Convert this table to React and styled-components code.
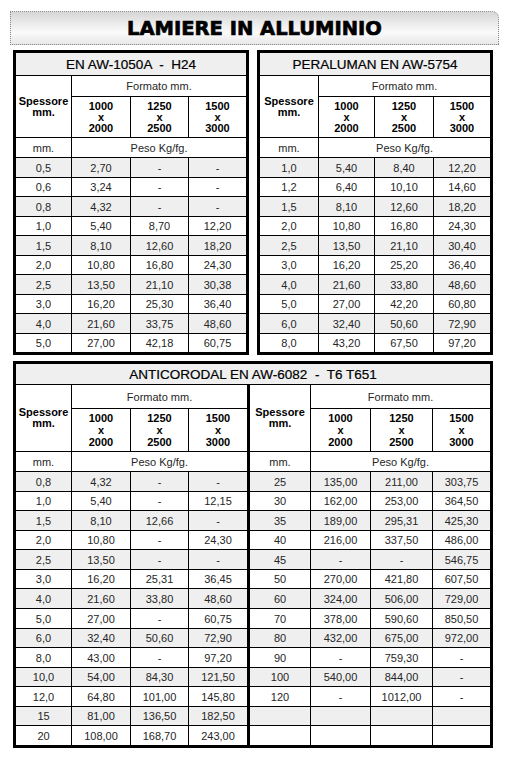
import React from "react";
import styled, { createGlobalStyle } from "styled-components";

const GlobalStyle = createGlobalStyle`
  body {
    margin: 0;
    background: #fff;
    font-family: "Liberation Sans", Arial, sans-serif;
  }
`;

const Page = styled.div`
  width: 506px;
  padding-top: 11px;
`;

const Banner = styled.div`
  height: 32px;
  margin: 0 7px 0 10px;
  border: 1px dotted #8a8a8a;
  border-top-right-radius: 7px;
  background: linear-gradient(180deg, #d6d6d6 0%, #ebebeb 35%, #fafafa 65%, #e8e8e8 100%);
  display: flex;
  align-items: center;
  justify-content: center;
`;

const BannerText = styled.h1`
  margin: 0;
  font-family: "DejaVu Sans", "Liberation Sans", sans-serif;
  font-size: 19.5px;
  font-weight: 700;
  color: #000;
  -webkit-text-stroke: 0.7px #000;
`;

const TopRow = styled.div`
  display: flex;
  gap: 8px;
  margin: 5px 13px 0;
`;

const Panel = styled.section`
  box-sizing: border-box;
  width: ${({ $width }) => $width}px;
  margin-top: ${({ $top }) => $top || 0}px;
  margin-left: ${({ $left }) => $left || 0}px;
  border: 3px solid #000;
`;

const PanelTitle = styled.h2`
  margin: 0;
  height: ${({ $h }) => $h}px;
  background: #efefef;
  border-bottom: 1px solid #000;
  display: flex;
  align-items: center;
  justify-content: center;
  font-size: 13.5px;
  font-weight: 400;
  color: #000;
  -webkit-text-stroke: 0.2px #000;
  white-space: pre;
`;

const Split = styled.div`
  display: flex;
`;

const Half = styled.div`
  border-right: ${({ $divider }) => ($divider ? "3px solid #000" : "none")};
`;

const Grid = styled.div`
  display: grid;
  gap: 1px;
  background: #000;
  grid-template-columns: ${({ $cols }) => $cols.map((c) => `${c}px`).join(" ")};
  grid-template-rows: ${({ $rows }) => $rows.map((r) => `${r}px`).join(" ")};
`;

const Cell = styled.div`
  display: flex;
  align-items: center;
  justify-content: center;
  text-align: center;
  background: ${({ $shade }) => ($shade ? "#efefef" : "#fff")};
  grid-column: ${({ $span }) => ($span ? `span ${$span}` : "auto")};
  font-size: 11px;
  color: #262626;
`;

const HeadCell = styled(Cell)`
  font-weight: 700;
  color: #000;
  line-height: ${({ $lh }) => $lh || 11}px;
`;

const SideHead = styled(HeadCell)`
  grid-row: span 2;
`;

const spread = (total, n) =>
  Array.from({ length: n }, (_, i) => Math.round(((i + 1) * total) / n) - Math.round((i * total) / n));

const SIZES = [
  ["1000", "2000"],
  ["1250", "2500"],
  ["1500", "3000"],
];

const Sheet = ({ cols, heads, dataHeight, rows, lh }) => (
  <Grid $cols={cols} $rows={[...heads, ...spread(dataHeight, rows.length)]}>
    <SideHead>
      Spessore
      <br />
      mm.
    </SideHead>
    <Cell $span={3}>Formato mm.</Cell>
    {SIZES.map(([a, b]) => (
      <HeadCell key={a} $lh={lh}>
        {a}
        <br />x<br />
        {b}
      </HeadCell>
    ))}
    <Cell>mm.</Cell>
    <Cell $span={3}>Peso Kg/fg.</Cell>
    {rows.map((row, i) =>
      row.map((v, j) => (
        <Cell key={`${i}-${j}`} $shade={i % 2 === 0}>
          {v}
        </Cell>
      ))
    )}
  </Grid>
);

const r = (s) => s.split(" ").map((v) => (v === "_" ? "" : v));

const PURE = [
  "0,5 2,70 - -",
  "0,6 3,24 - -",
  "0,8 4,32 - -",
  "1,0 5,40 8,70 12,20",
  "1,5 8,10 12,60 18,20",
  "2,0 10,80 16,80 24,30",
  "2,5 13,50 21,10 30,38",
  "3,0 16,20 25,30 36,40",
  "4,0 21,60 33,75 48,60",
  "5,0 27,00 42,18 60,75",
].map(r);

const PERALUMAN = [
  "1,0 5,40 8,40 12,20",
  "1,2 6,40 10,10 14,60",
  "1,5 8,10 12,60 18,20",
  "2,0 10,80 16,80 24,30",
  "2,5 13,50 21,10 30,40",
  "3,0 16,20 25,20 36,40",
  "4,0 21,60 33,80 48,60",
  "5,0 27,00 42,20 60,80",
  "6,0 32,40 50,60 72,90",
  "8,0 43,20 67,50 97,20",
].map(r);

const ANTI_THIN = [
  "0,8 4,32 - -",
  "1,0 5,40 - 12,15",
  "1,5 8,10 12,66 -",
  "2,0 10,80 - 24,30",
  "2,5 13,50 - -",
  "3,0 16,20 25,31 36,45",
  "4,0 21,60 33,80 48,60",
  "5,0 27,00 - 60,75",
  "6,0 32,40 50,60 72,90",
  "8,0 43,00 - 97,20",
  "10,0 54,00 84,30 121,50",
  "12,0 64,80 101,00 145,80",
  "15 81,00 136,50 182,50",
  "20 108,00 168,70 243,00",
].map(r);

const ANTI_THICK = [
  "25 135,00 211,00 303,75",
  "30 162,00 253,00 364,50",
  "35 189,00 295,31 425,30",
  "40 216,00 337,50 486,00",
  "45 - - 546,75",
  "50 270,00 421,80 607,50",
  "60 324,00 506,00 729,00",
  "70 378,00 590,60 850,50",
  "80 432,00 675,00 972,00",
  "90 - 759,30 -",
  "100 540,00 844,00 -",
  "120 - 1012,00 -",
  "_ _ _ _",
  "_ _ _ _",
].map(r);

const App = () => (
  <Page>
    <GlobalStyle />
    <Banner>
      <BannerText>LAMIERE IN ALLUMINIO</BannerText>
    </Banner>
    <TopRow>
      <Panel $width={236}>
        <PanelTitle $h={22}>{"EN AW-1050A  -  H24"}</PanelTitle>
        <Sheet cols={[55, 58, 57, 57]} heads={[20, 40, 19]} dataHeight={185} rows={PURE} />
      </Panel>
      <Panel $width={236}>
        <PanelTitle $h={22}>PERALUMAN EN AW-5754</PanelTitle>
        <Sheet cols={[58, 55, 58, 56]} heads={[20, 40, 19]} dataHeight={185} rows={PERALUMAN} />
      </Panel>
    </TopRow>
    <Panel $width={480} $top={6} $left={13}>
      <PanelTitle $h={20}>{"ANTICORODAL EN AW-6082  -  T6 T651"}</PanelTitle>
      <Split>
        <Half $divider>
          <Sheet cols={[55, 58, 57, 58]} heads={[23, 42, 19]} dataHeight={260} rows={ANTI_THIN} lh={12} />
        </Half>
        <Half>
          <Sheet cols={[60, 59, 61, 57]} heads={[23, 42, 19]} dataHeight={260} rows={ANTI_THICK} lh={12} />
        </Half>
      </Split>
    </Panel>
  </Page>
);

export default App;
